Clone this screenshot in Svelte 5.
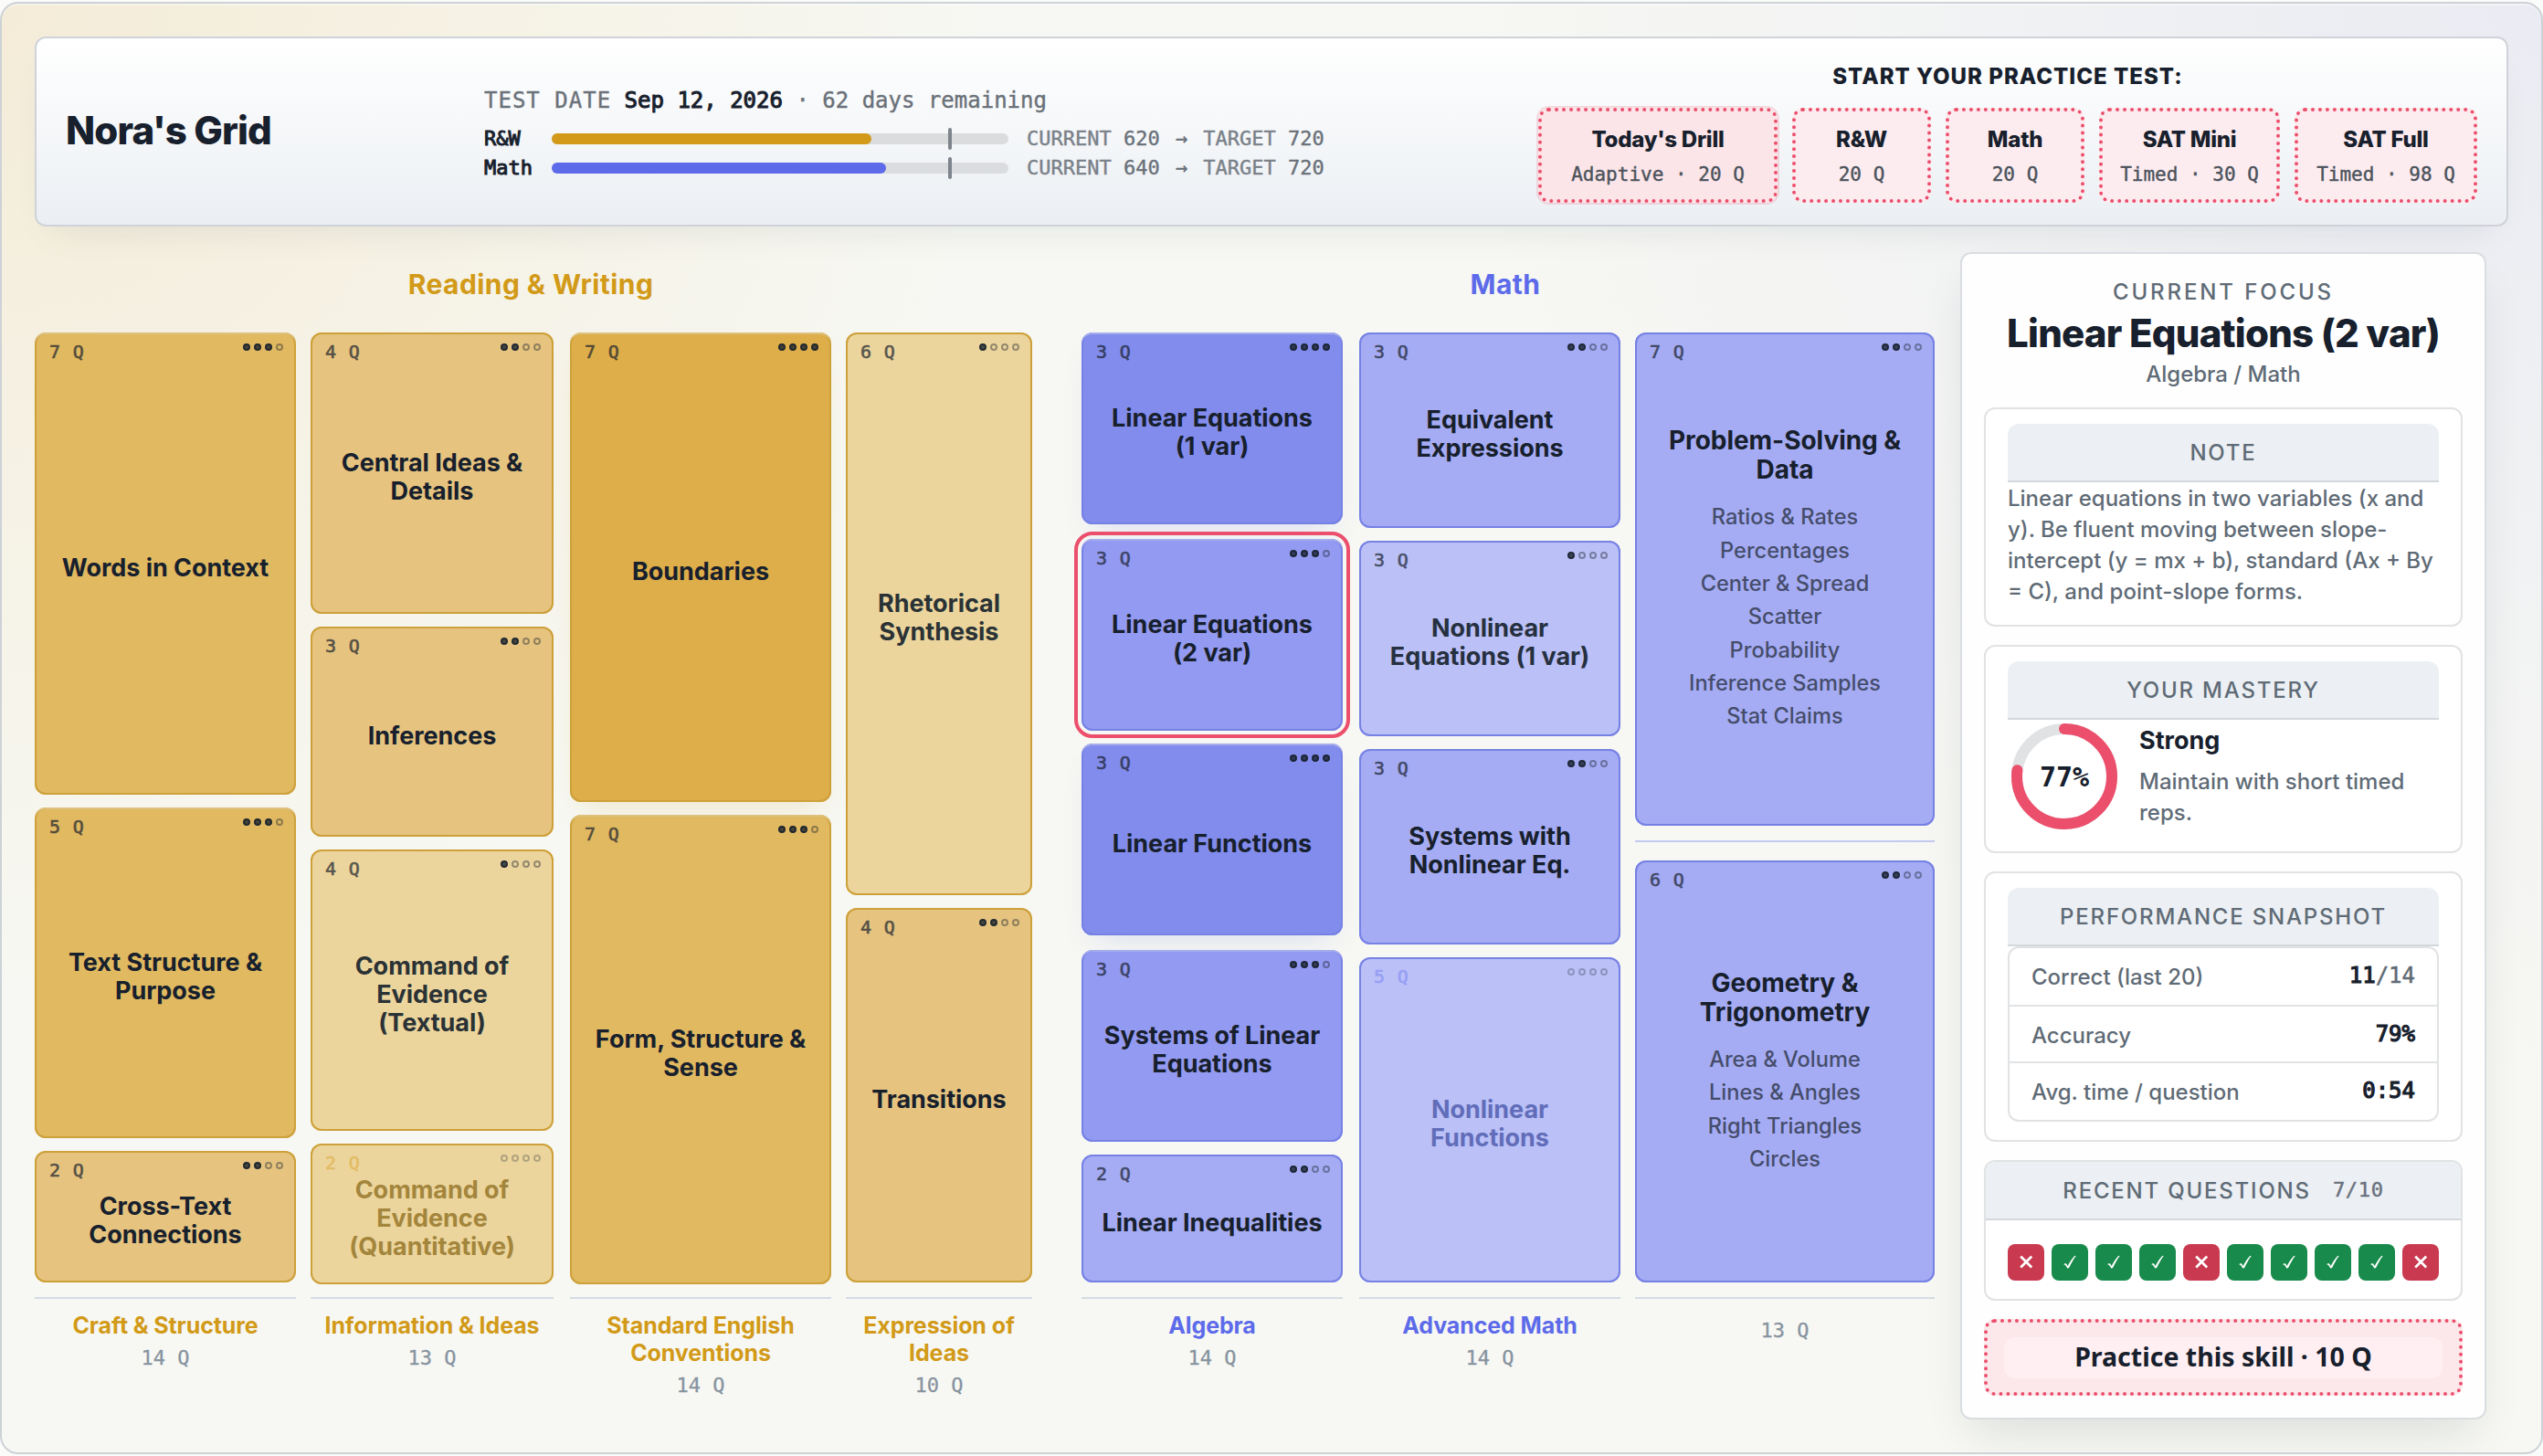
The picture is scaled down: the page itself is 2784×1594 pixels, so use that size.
<script>
  const drills = [
    { name: "Today's Drill", meta: 'Adaptive · 20 Q', size: 'wide' },
    { name: 'R&W', meta: '20 Q', size: 'small' },
    { name: 'Math', meta: '20 Q', size: 'small' },
    { name: 'SAT Mini', meta: 'Timed · 30 Q', size: 'mid' },
    { name: 'SAT Full', meta: 'Timed · 98 Q', size: 'full' }
  ];

  const scores = [
    { name: 'R&W', tone: 'gold', fill: 70, current: 620, target: 720 },
    { name: 'Math', tone: 'blue', fill: 73.2, current: 640, target: 720 }
  ];

  const sections = [
    {
      title: 'Reading & Writing',
      tone: 'gold',
      columns: [
        {
          label: ['Craft & Structure'], total: '14 Q', width: 286,
          tiles: [
            { name: ['Words in Context'], q: 7, level: 3, h: 506 },
            { name: ['Text Structure &', 'Purpose'], q: 5, level: 3, h: 362 },
            { name: ['Cross-Text', 'Connections'], q: 2, level: 2, h: 144 }
          ]
        },
        {
          label: ['Information & Ideas'], total: '13 Q', width: 266,
          tiles: [
            { name: ['Central Ideas &', 'Details'], q: 4, level: 2, h: 308 },
            { name: ['Inferences'], q: 3, level: 2, h: 230 },
            { name: ['Command of', 'Evidence', '(Textual)'], q: 4, level: 1, h: 308 },
            { name: ['Command of', 'Evidence', '(Quantitative)'], q: 2, level: 0, h: 154 }
          ]
        },
        {
          label: ['Standard English', 'Conventions'], total: '14 Q', width: 286,
          tiles: [
            { name: ['Boundaries'], q: 7, level: 4, h: 514 },
            { name: ['Form, Structure &', 'Sense'], q: 7, level: 3, h: 514 }
          ]
        },
        {
          label: ['Expression of', 'Ideas'], total: '10 Q', width: 204,
          tiles: [
            { name: ['Rhetorical', 'Synthesis'], q: 6, level: 1, h: 616 },
            { name: ['Transitions'], q: 4, level: 2, h: 410 }
          ]
        }
      ]
    },
    {
      title: 'Math',
      tone: 'blue',
      columns: [
        {
          label: ['Algebra'], total: '14 Q', width: 286,
          tiles: [
            { name: ['Linear Equations', '(1 var)'], q: 3, level: 4, h: 210, gap: 16 },
            { name: ['Linear Equations', '(2 var)'], q: 3, level: 3, h: 210, active: true },
            { name: ['Linear Functions'], q: 3, level: 4, h: 210, gap: 16 },
            { name: ['Systems of Linear', 'Equations'], q: 3, level: 3, h: 210 },
            { name: ['Linear Inequalities'], q: 2, level: 2, h: 140 }
          ]
        },
        {
          label: ['Advanced Math'], total: '14 Q', width: 286,
          tiles: [
            { name: ['Equivalent', 'Expressions'], q: 3, level: 2, h: 214 },
            { name: ['Nonlinear', 'Equations (1 var)'], q: 3, level: 1, h: 214 },
            { name: ['Systems with', 'Nonlinear Eq.'], q: 3, level: 2, h: 214 },
            { name: ['Nonlinear', 'Functions'], q: 5, level: 0, h: 356 }
          ]
        },
        {
          label: [], total: '13 Q', width: 328, divided: true,
          tiles: [
            {
              name: ['Problem-Solving &', 'Data'], q: 7, level: 2, h: 540, gap: 16,
              topics: ['Ratios & Rates', 'Percentages', 'Center & Spread', 'Scatter', 'Probability', 'Inference Samples', 'Stat Claims']
            },
            {
              name: ['Geometry &', 'Trigonometry'], q: 6, level: 2, h: 462,
              topics: ['Area & Volume', 'Lines & Angles', 'Right Triangles', 'Circles']
            }
          ]
        }
      ]
    }
  ];

  const recent = [false, true, true, true, false, true, true, true, true, false];
  const mastery = 77;
  const circumference = 2 * Math.PI * 52;
</script>

<div class="frame">
  <header class="top">
    <h1>Nora's Grid</h1>
    <div class="plan">
      <div class="date"><span class="caps">TEST DATE</span> <b>Sep 12, 2026</b> · 62 days remaining</div>
      {#each scores as s}
        <div class="score">
          <b>{s.name}</b>
          <div class="track">
            <div class="fill {s.tone}" style:width="{s.fill}%"></div>
            <i class="goal"></i>
          </div>
          <span class="range"><span>CURRENT</span> {s.current} <i class="arrow">→</i> <span>TARGET</span> {s.target}</span>
        </div>
      {/each}
    </div>
    <div class="start">
      <h2>START YOUR PRACTICE TEST:</h2>
      <div class="drills">
        {#each drills as d}
          <button class="drill {d.size}"><strong>{d.name}</strong><span>{d.meta}</span></button>
        {/each}
      </div>
    </div>
  </header>

  <main>
    {#each sections as section}
      <section class={section.tone}>
        <h2>{section.title}</h2>
        <div class="columns">
          {#each section.columns as col}
            <div class="column" style:width="{col.width}px">
              <div class="tiles">
                {#each col.tiles as t, i}
                  {#if i === 1 && col.divided}<div class="rule"></div>{/if}
                  <article
                    class="tile l{t.level}"
                    class:active={t.active}
                    class:group={t.topics}
                    style:height="{t.h}px"
                    style:margin-bottom="{t.gap ?? 14}px"
                  >
                    <span class="count">{t.q} Q</span>
                    <span class="dots">
                      {#each [1, 2, 3, 4] as n}<i class:on={n <= t.level}></i>{/each}
                    </span>
                    <h3>{#each t.name as line}<span>{line}</span>{/each}</h3>
                    {#if t.topics}
                      <ul>{#each t.topics as topic}<li>{topic}</li>{/each}</ul>
                    {/if}
                  </article>
                {/each}
              </div>
              <footer class:bare={!col.label.length}>
                {#if col.label.length}
                  <h4>{#each col.label as line}<span>{line}</span>{/each}</h4>
                {/if}
                <span class="total">{col.total}</span>
              </footer>
            </div>
          {/each}
        </div>
      </section>
    {/each}

    <aside>
      <div class="focus">CURRENT FOCUS</div>
      <h2>Linear Equations (2 var)</h2>
      <div class="path">Algebra / Math</div>

      <div class="card note">
        <div class="head">NOTE</div>
        <p>Linear equations in two variables (x and y). Be fluent moving between slope-intercept (y = mx + b), standard (Ax + By = C), and point-slope forms.</p>
      </div>

      <div class="card mastery">
        <div class="head">YOUR MASTERY</div>
        <div class="level">
          <div class="ring">
            <svg viewBox="0 0 124 124" width="124" height="124">
              <circle cx="62" cy="62" r="52" fill="none" stroke="#e0e2e4" stroke-width="12" />
              <circle
                cx="62" cy="62" r="52" fill="none" stroke="#eb4f6c" stroke-width="12" stroke-linecap="round"
                stroke-dasharray="{(circumference * mastery) / 100} {circumference}" transform="rotate(-90 62 62)"
              />
            </svg>
            <b>{mastery}%</b>
          </div>
          <div class="advice">
            <strong>Strong</strong>
            <p>Maintain with short timed reps.</p>
          </div>
        </div>
      </div>

      <div class="card stats">
        <div class="head">PERFORMANCE SNAPSHOT</div>
        <div class="table">
          <div class="row"><span>Correct (last 20)</span><b>11<em>/14</em></b></div>
          <div class="row"><span>Accuracy</span><b>79%</b></div>
          <div class="row"><span>Avg. time / question</span><b>0:54</b></div>
        </div>
      </div>

      <div class="card recent">
        <div class="head"><span>RECENT QUESTIONS</span><em>7/10</em></div>
        <div class="marks">
          {#each recent as ok}
            <div class="mark" class:ok>
              <svg viewBox="0 0 40 40" width="40" height="40">
                {#if ok}
                  <path fill="#fff" d="M13.1 22.3c.6-1 2.2-1.5 3-.7.7.7 1.1 1.6 1.5 2.5 2.2-4.2 4.7-8.1 7.8-11.3l1.3.1c-3.1 4-5.5 8.6-7.6 13.2-.6.6-1.6.6-2 .1-.9-1.7-1.7-3.4-4-3.9z" />
                {:else}
                  <path fill="none" stroke="#fff" stroke-width="2.7" d="M14.2 13.5l12 12M26.2 13.5l-12 12" />
                {/if}
              </svg>
            </div>
          {/each}
        </div>
      </div>

      <button class="practice"><span>Practice this skill · 10 Q</span></button>
    </aside>
  </main>
</div>

<style>
  :global(body) {
    background: #fbfcfa;
  }
  .frame {
    --ink: #17202c;
    --mute: #5f6b76;
    --mono: 'DejaVu Sans Mono', 'Liberation Mono', monospace;
    box-sizing: border-box;
    width: 2784px;
    height: 1590px;
    margin-top: 2px;
    padding: 36px 36px 0;
    border: 2px solid #cdd2d7;
    border-radius: 20px;
    overflow: hidden;
    font-family: Inter, 'Liberation Sans', sans-serif;
    color: var(--ink);
    background:
      radial-gradient(circle at 0 0, rgba(230, 180, 90, 0.18), rgba(230, 180, 90, 0) 1080px),
      radial-gradient(circle at 100% 0, rgba(150, 150, 240, 0.13), rgba(150, 150, 240, 0) 1180px),
      #f7f8f3;
    box-shadow: inset 0 2px 0 rgba(255, 255, 255, 0.4);
  }
  .frame :global(*) {
    box-sizing: border-box;
  }
  h1, h2, h3, h4, p, ul {
    margin: 0;
    padding: 0;
  }
  button {
    font: inherit;
    color: inherit;
  }
  i, em {
    font-style: normal;
  }

  .top {
    display: flex;
    align-items: flex-start;
    height: 208px;
    padding: 0 32px;
    border: 2px solid #cfd3d9;
    border-radius: 12px;
    background: linear-gradient(#fff, #ebeff3);
    box-shadow: 0 20px 40px -20px rgba(20, 30, 50, 0.1);
  }
  h1 {
    flex: none;
    width: 458px;
    margin-top: 77px;
    font-size: 42px;
    line-height: 48px;
    font-weight: 800;
    letter-spacing: -0.02em;
  }
  .plan {
    margin-top: 54px;
    font-family: var(--mono);
    color: #6a7179;
    white-space: nowrap;
    -webkit-text-stroke: 0.4px currentColor;
  }
  .date {
    margin-bottom: 12px;
    font-size: 24px;
    line-height: 28px;
  }
  .caps {
    letter-spacing: 0.042em;
  }
  .plan b {
    font-weight: 400;
    -webkit-text-stroke: 1px currentColor;
    color: var(--ink);
  }
  .score {
    display: grid;
    grid-template-columns: 54px 500px auto;
    gap: 20px;
    align-items: center;
    height: 32px;
    font-size: 22px;
    line-height: 32px;
  }
  .track {
    position: relative;
    height: 12px;
    border-radius: 6px;
    background: #dadcde;
  }
  .fill {
    height: 12px;
    border-radius: 6px;
  }
  .fill.gold { background: #d29a18; }
  .fill.blue { background: #5d6bea; }
  .goal {
    position: absolute;
    left: 434px;
    top: -6px;
    width: 4px;
    height: 24px;
    border-radius: 2px;
    background: #7d848c;
  }
  .range span {
    color: #7a8189;
  }
  .arrow {
    display: inline-block;
    width: 21px;
    text-align: center;
  }
  .start {
    margin: 28px 0 0 auto;
    text-align: center;
  }
  .start h2 {
    margin-bottom: 20px;
    font-size: 24px;
    line-height: 28px;
    font-weight: 800;
    letter-spacing: 1.02px;
    white-space: nowrap;
  }
  .drills {
    display: flex;
    gap: 16px;
  }
  .drill {
    display: flex;
    flex-direction: column;
    align-items: center;
    gap: 10px;
    height: 104px;
    padding: 17px 0 0;
    border: 4px dotted #eb4f6c;
    border-radius: 12px;
    background: #fdecef;
    white-space: nowrap;
  }
  .drill strong {
    font-size: 24px;
    line-height: 28px;
    font-weight: 800;
    letter-spacing: -0.01em;
  }
  .drill span {
    font-family: var(--mono);
    font-size: 21px;
    line-height: 28px;
    color: #4b535c;
    -webkit-text-stroke: 0.4px currentColor;
  }
  .wide {
    width: 262px;
    background: #fce5e8;
    box-shadow: 0 0 0 2px rgba(235, 79, 108, 0.18);
  }
  .small { width: 152px; }
  .mid { width: 198px; }
  .full { width: 200px; }

  main {
    display: flex;
    align-items: flex-start;
  }
  section {
    margin-top: 45px;
  }
  section.gold {
    --accent: #d29a18;
    --edge: #cda03a;
    --c4: #deae4a;
    --c3: #e1b961;
    --c2: #e6c480;
    --c1: #ecd59d;
    --faint: #a3853c;
    --faintq: #e3bc66;
    --dim: #2a3235;
    --glow: rgba(210, 154, 24, 0.22);
  }
  section.blue {
    --accent: #5d6bea;
    --edge: #7681e4;
    --c4: #828ced;
    --c3: #939af1;
    --c2: #a5acf4;
    --c1: #bbc0f7;
    --faint: #616db9;
    --faintq: #979ff4;
    --dim: #26303f;
    --glow: rgba(93, 107, 234, 0.2);
    margin-left: 54px;
  }
  section > h2 {
    padding-right: 6px;
    margin-bottom: 35px;
    font-size: 30px;
    line-height: 36px;
    font-weight: 700;
    letter-spacing: 0.42px;
    text-align: center;
    color: var(--accent);
  }
  .columns {
    display: flex;
    gap: 16px;
  }
  .gold .column:nth-child(3) { margin-left: 2px; }
  .blue .column:nth-child(2) { margin-left: 2px; }
  .tiles {
    height: 1056px;
  }
  .rule {
    height: 2px;
    margin-bottom: 20px;
    background: #c3c9f0;
  }
  .tile {
    position: relative;
    display: flex;
    flex-direction: column;
    align-items: center;
    justify-content: center;
    padding-top: 8px;
    border-radius: 12px;
    text-align: center;
    white-space: nowrap;
    box-shadow: inset 0 0 0 2px var(--edge);
  }
  .tile.group {
    padding-top: 6px;
  }
  .l4 {
    background: var(--c4);
    box-shadow: inset 0 2px 0 rgba(255, 255, 255, 0.35), inset 0 0 0 2px var(--edge), 0 16px 32px -14px var(--glow);
  }
  .l3 {
    background: var(--c3);
    box-shadow: inset 0 2px 0 rgba(255, 255, 255, 0.35), inset 0 0 0 2px var(--edge);
  }
  .l2 { background: var(--c2); }
  .l1, .l0 { background: var(--c1); }
  .l1 h3 { color: var(--dim); }
  .l0 h3 { color: var(--faint); }
  .l0 .count { color: var(--faintq); opacity: 1; }
  .l0 .dots i { opacity: 0.28; }
  .active {
    outline: 4px solid #eb4f6c;
    outline-offset: 4px;
  }
  h3 span, h4 span {
    display: block;
  }
  h3 {
    font-size: 27px;
    line-height: 31px;
    font-weight: 700;
    letter-spacing: -0.04px;
  }
  .count {
    position: absolute;
    left: 16px;
    top: 8px;
    font-family: var(--mono);
    font-size: 20px;
    line-height: 26px;
    letter-spacing: 0.04em;
    opacity: 0.7;
    -webkit-text-stroke: 0.6px currentColor;
  }
  .dots {
    position: absolute;
    top: 12px;
    right: 14px;
    display: flex;
    gap: 4px;
  }
  .dots i {
    width: 8px;
    height: 8px;
    border: 2px solid var(--ink);
    border-radius: 50%;
    opacity: 0.42;
  }
  .dots .on {
    background: rgba(23, 32, 44, 0.8);
    opacity: 0.95;
  }
  .group h3 {
    margin-top: -5px;
    font-size: 28px;
    line-height: 32px;
  }
  ul {
    margin-top: 18px;
    list-style: none;
    font-size: 23.6px;
    line-height: 36.3px;
    font-weight: 500;
    color: #454d6b;
  }
  footer {
    padding-top: 14px;
    border-top: 2px solid #d5dbe5;
    text-align: center;
    white-space: nowrap;
  }
  footer.bare {
    padding-top: 15px;
  }
  h4 {
    margin-bottom: 6px;
    font-size: 25px;
    line-height: 30px;
    font-weight: 700;
    letter-spacing: -0.1px;
    color: var(--accent);
  }
  .total {
    display: block;
    font-family: var(--mono);
    font-size: 22px;
    line-height: 30px;
    color: #8793a0;
    -webkit-text-stroke: 0.3px currentColor;
  }
  .bare .total {
    margin-top: 5px;
  }

  aside {
    width: 576px;
    height: 1278px;
    margin: 28px 0 0 28px;
    padding: 27px 24px 0;
    border: 2px solid #dadde1;
    border-radius: 12px;
    background: #fefefe;
    box-shadow: 0 24px 48px -12px rgba(20, 30, 50, 0.12);
    text-align: center;
    color: var(--mute);
    font-size: 24px;
    font-weight: 500;
  }
  .focus {
    line-height: 30px;
    letter-spacing: 0.12em;
  }
  aside h2 {
    margin: 6px 0;
    font-size: 42px;
    line-height: 48px;
    font-weight: 800;
    letter-spacing: -0.019em;
    white-space: nowrap;
    color: var(--ink);
  }
  .path {
    margin-bottom: 21px;
    line-height: 30px;
  }
  .card {
    margin-bottom: 20px;
    padding: 16px 24px 0;
    border: 2px solid #e0e2e4;
    border-radius: 12px;
    background: #fff;
  }
  .note { height: 240px; }
  .mastery { height: 228px; }
  .stats { height: 296px; }
  .recent { height: 154px; padding: 0; overflow: hidden; }
  .head {
    height: 64px;
    padding-top: 1px;
    border-bottom: 2px solid #d3d8dd;
    border-radius: 12px 12px 0 0;
    background: #ecf0f4;
    line-height: 62px;
    letter-spacing: 1.8px;
    white-space: nowrap;
  }
  .note p {
    padding-top: 1px;
    text-align: left;
    line-height: 34px;
  }
  .level {
    display: flex;
    gap: 20px;
    text-align: left;
  }
  .ring {
    position: relative;
    flex: none;
    width: 124px;
    height: 124px;
  }
  .ring b {
    position: absolute;
    inset: 0;
    font-family: var(--mono);
    font-size: 30px;
    line-height: 125px;
    text-align: center;
    color: var(--ink);
  }
  .advice strong {
    display: block;
    margin: 6px 0 11px;
    font-size: 27px;
    line-height: 34px;
    font-weight: 700;
    color: var(--ink);
  }
  .advice p {
    line-height: 34px;
  }
  .table {
    border: 2px solid #e0e2e4;
    border-radius: 12px;
    height: 192px;
  }
  .row {
    display: flex;
    justify-content: space-between;
    height: 62px;
    padding: 0 24px;
    line-height: 63px;
  }
  .row + .row {
    border-top: 2px solid #e0e2e4;
  }
  .row b {
    font-family: var(--mono);
    font-weight: 400;
    line-height: 60px;
    -webkit-text-stroke: 1.2px currentColor;
    color: var(--ink);
  }
  .row em {
    -webkit-text-stroke: 0.5px currentColor;
    color: var(--mute);
  }
  .recent .head {
    display: flex;
    justify-content: center;
    gap: 24px;
    border-radius: 0;
  }
  .head em {
    font-family: var(--mono);
    font-size: 22px;
    line-height: 59px;
    letter-spacing: 0.7px;
    color: #6b7280;
    -webkit-text-stroke: 0.5px currentColor;
  }
  .marks {
    display: flex;
    justify-content: space-between;
    padding: 26px 24px 0;
  }
  .mark {
    width: 40px;
    height: 40px;
    border-radius: 8px;
    background: #c93a50;
  }
  .ok {
    background: #188a4b;
  }
  .mark svg, .ring svg {
    display: block;
  }
  .practice {
    display: block;
    width: 524px;
    height: 84px;
    padding: 16px 18px;
    border: 4px dotted #eb4f6c;
    border-radius: 12px;
    background: #fce8eb;
  }
  .practice span {
    display: block;
    height: 45px;
    border-radius: 12px;
    background: #ffeff2;
    font-family: 'Noto Sans', 'Open Sans', sans-serif;
    font-size: 28.5px;
    line-height: 43px;
    font-weight: 700;
    color: var(--ink);
  }
</style>
